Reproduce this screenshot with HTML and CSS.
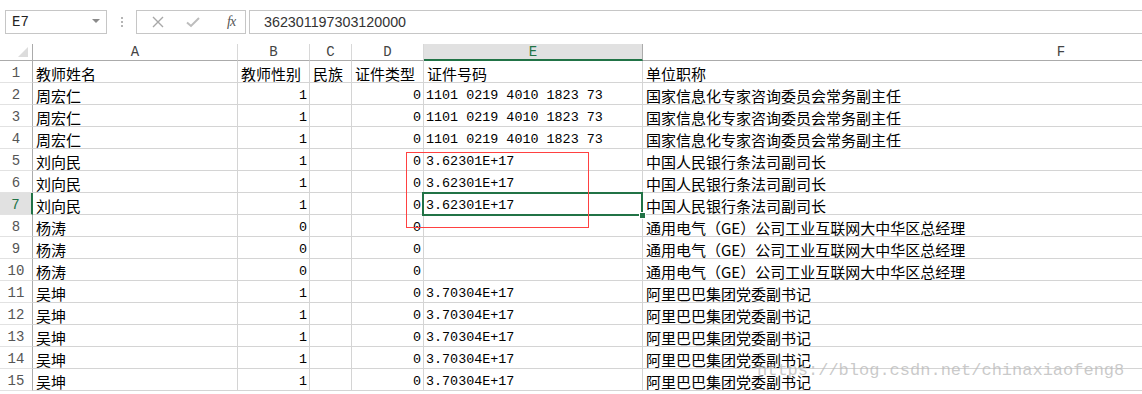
FILE: index.html
```html
<!DOCTYPE html>
<html lang="zh-CN">
<head>
    <meta charset="UTF-8">
    <title>Sheet1</title>
    <link rel="stylesheet" href="styles.css">
</head>
<body>
    <div class="formula-bar">
        <div class="name-box">
            <span>E7</span>
            <span class="drop"></span>
        </div>
        <div class="grip"><i></i><i></i><i></i></div>
        <div class="fx-tools">
            <svg class="tool" width="14" height="14" viewBox="0 0 14 14"><path d="M2 2 L12 12 M12 2 L2 12" stroke="#a8a8a8" stroke-width="1.4" fill="none"/></svg>
            <svg class="tool" width="16" height="14" viewBox="0 0 16 14"><path d="M2 7.5 L6 11 L14 3" stroke="#bdbdbd" stroke-width="2" fill="none"/></svg>
            <span class="fx">fx</span>
        </div>
        <div class="formula-input">362301197303120000</div>
    </div>

    <div class="sheet">
        <div class="row head">
            <div class="rh corner"><span class="tri"></span></div>
            <div class="c col-a">A</div>
            <div class="c col-b">B</div>
            <div class="c col-c">C</div>
            <div class="c col-d">D</div>
            <div class="c col-e active">E</div>
            <div class="c col-f">F</div>
        </div>

        <div class="row">
            <div class="rh">1</div>
            <div class="c col-a">教师姓名</div>
            <div class="c col-b">教师性别</div>
            <div class="c col-c">民族</div>
            <div class="c col-d">证件类型</div>
            <div class="c col-e">证件号码</div>
            <div class="c col-f">单位职称</div>
        </div>
        <div class="row">
            <div class="rh">2</div>
            <div class="c col-a">周宏仁</div>
            <div class="c col-b num">1</div>
            <div class="c col-c"></div>
            <div class="c col-d num">0</div>
            <div class="c col-e mono">1101 0219 4010 1823 73</div>
            <div class="c col-f">国家信息化专家咨询委员会常务副主任</div>
        </div>
        <div class="row">
            <div class="rh">3</div>
            <div class="c col-a">周宏仁</div>
            <div class="c col-b num">1</div>
            <div class="c col-c"></div>
            <div class="c col-d num">0</div>
            <div class="c col-e mono">1101 0219 4010 1823 73</div>
            <div class="c col-f">国家信息化专家咨询委员会常务副主任</div>
        </div>
        <div class="row">
            <div class="rh">4</div>
            <div class="c col-a">周宏仁</div>
            <div class="c col-b num">1</div>
            <div class="c col-c"></div>
            <div class="c col-d num">0</div>
            <div class="c col-e mono">1101 0219 4010 1823 73</div>
            <div class="c col-f">国家信息化专家咨询委员会常务副主任</div>
        </div>
        <div class="row">
            <div class="rh">5</div>
            <div class="c col-a">刘向民</div>
            <div class="c col-b num">1</div>
            <div class="c col-c"></div>
            <div class="c col-d num">0</div>
            <div class="c col-e mono">3.62301E+17</div>
            <div class="c col-f">中国人民银行条法司副司长</div>
        </div>
        <div class="row">
            <div class="rh">6</div>
            <div class="c col-a">刘向民</div>
            <div class="c col-b num">1</div>
            <div class="c col-c"></div>
            <div class="c col-d num">0</div>
            <div class="c col-e mono">3.62301E+17</div>
            <div class="c col-f">中国人民银行条法司副司长</div>
        </div>
        <div class="row">
            <div class="rh active">7</div>
            <div class="c col-a">刘向民</div>
            <div class="c col-b num">1</div>
            <div class="c col-c"></div>
            <div class="c col-d num">0</div>
            <div class="c col-e mono selected">3.62301E+17<span class="outline"><span class="handle"></span></span></div>
            <div class="c col-f">中国人民银行条法司副司长</div>
        </div>
        <div class="row">
            <div class="rh">8</div>
            <div class="c col-a">杨涛</div>
            <div class="c col-b num">0</div>
            <div class="c col-c"></div>
            <div class="c col-d num">0</div>
            <div class="c col-e"></div>
            <div class="c col-f">通用电气（GE）公司工业互联网大中华区总经理</div>
        </div>
        <div class="row">
            <div class="rh">9</div>
            <div class="c col-a">杨涛</div>
            <div class="c col-b num">0</div>
            <div class="c col-c"></div>
            <div class="c col-d num">0</div>
            <div class="c col-e"></div>
            <div class="c col-f">通用电气（GE）公司工业互联网大中华区总经理</div>
        </div>
        <div class="row">
            <div class="rh">10</div>
            <div class="c col-a">杨涛</div>
            <div class="c col-b num">0</div>
            <div class="c col-c"></div>
            <div class="c col-d num">0</div>
            <div class="c col-e"></div>
            <div class="c col-f">通用电气（GE）公司工业互联网大中华区总经理</div>
        </div>
        <div class="row">
            <div class="rh">11</div>
            <div class="c col-a">吴坤</div>
            <div class="c col-b num">1</div>
            <div class="c col-c"></div>
            <div class="c col-d num">0</div>
            <div class="c col-e mono">3.70304E+17</div>
            <div class="c col-f">阿里巴巴集团党委副书记</div>
        </div>
        <div class="row">
            <div class="rh">12</div>
            <div class="c col-a">吴坤</div>
            <div class="c col-b num">1</div>
            <div class="c col-c"></div>
            <div class="c col-d num">0</div>
            <div class="c col-e mono">3.70304E+17</div>
            <div class="c col-f">阿里巴巴集团党委副书记</div>
        </div>
        <div class="row">
            <div class="rh">13</div>
            <div class="c col-a">吴坤</div>
            <div class="c col-b num">1</div>
            <div class="c col-c"></div>
            <div class="c col-d num">0</div>
            <div class="c col-e mono">3.70304E+17</div>
            <div class="c col-f">阿里巴巴集团党委副书记</div>
        </div>
        <div class="row">
            <div class="rh">14</div>
            <div class="c col-a">吴坤</div>
            <div class="c col-b num">1</div>
            <div class="c col-c"></div>
            <div class="c col-d num">0</div>
            <div class="c col-e mono">3.70304E+17</div>
            <div class="c col-f">阿里巴巴集团党委副书记</div>
        </div>
        <div class="row">
            <div class="rh">15</div>
            <div class="c col-a">吴坤</div>
            <div class="c col-b num">1</div>
            <div class="c col-c"></div>
            <div class="c col-d num">0</div>
            <div class="c col-e mono">3.70304E+17</div>
            <div class="c col-f">阿里巴巴集团党委副书记</div>
        </div>

        <!-- hand-drawn annotation box -->
        <div class="red-box"></div>
    </div>

    <div class="watermark">https://blog.csdn.net/chinaxiaofeng8</div>
</body>
</html>
```

FILE: styles.css
```css
body {
    margin: 0;
    background-color: #fff;
    overflow: hidden;
    font-family: "Noto Sans CJK SC", sans-serif;
    color: #000;
}

/* formula bar */
.formula-bar {
    display: flex;
    align-items: center;
    height: 24px;
    padding: 10px 0 0 5px;
    margin-bottom: 10px;
}

.name-box {
    display: flex;
    align-items: center;
    justify-content: space-between;
    width: 102px;
    height: 24px;
    box-sizing: border-box;
    border: 1px solid #c6c6c6;
    padding: 0 6px 0 6px;
    font-family: "Liberation Mono", monospace;
    font-size: 14px;
    color: #222;
}

.drop {
    width: 0;
    height: 0;
    border-left: 4px solid transparent;
    border-right: 4px solid transparent;
    border-top: 4px solid #8a8a8a;
    margin-bottom: 2px;
}

.grip {
    display: flex;
    flex-direction: column;
    gap: 2px;
    margin: 0 13px 0 14px;
}

.grip i {
    display: block;
    width: 2px;
    height: 2px;
    background-color: #b5b5b5;
}

.fx-tools {
    display: flex;
    align-items: center;
    width: 110px;
    height: 24px;
    box-sizing: border-box;
    border: 1px solid #c6c6c6;
    padding-left: 14px;
}

.tool {
    margin-right: 20px;
}

.tool + .tool {
    margin-right: 26px;
}

.fx {
    font-family: "Liberation Serif", serif;
    font-style: italic;
    font-size: 14px;
    color: #555;
    letter-spacing: -1px;
}

.formula-input {
    flex: 1;
    height: 24px;
    box-sizing: border-box;
    margin-left: 3px;
    border-top: 1px solid #c6c6c6;
    border-bottom: 1px solid #c6c6c6;
    border-left: 1px solid #c6c6c6;
    padding-left: 14px;
    line-height: 22px;
    font-family: "Liberation Sans", sans-serif;
    font-size: 14.3px;
    color: #333;
}

/* grid */
.sheet {
    position: relative;
    width: 1479px;
}

.row {
    display: flex;
    height: 22px;
}

.row.head {
    height: 17px;
}

.rh {
    width: 33px;
    flex: none;
    box-sizing: border-box;
    border-right: 1px solid #ababab;
    border-bottom: 1px solid #e2e2e2;
    text-align: center;
    font-family: "Liberation Mono", monospace;
    font-size: 14px;
    line-height: 25px;
    color: #555;
}

.rh.active {
    background-color: #e1e1e1;
    border-right: 2px solid #217346;
    color: #217346;
}

.corner {
    position: relative;
    border-bottom: 1px solid #ababab;
}

.tri {
    position: absolute;
    right: 4px;
    bottom: 3px;
    width: 0;
    height: 0;
    border-left: 10px solid transparent;
    border-bottom: 10px solid #dcdcdc;
}

.c {
    flex: none;
    box-sizing: border-box;
    border-right: 1px solid #d4d4d4;
    border-bottom: 1px solid #d4d4d4;
    padding: 0 3px;
    font-size: 15px;
    line-height: 25px;
    white-space: nowrap;
    overflow: hidden;
}

.head .c {
    text-align: center;
    border-right-color: #d8d8d8;
    border-bottom: 1px solid #ababab;
    font-family: "Liberation Mono", monospace;
    font-size: 14px;
    line-height: 17px;
    color: #444;
}

.head .c.active {
    background-color: #e1e1e1;
    border-bottom: 2px solid #217346;
    border-right-color: #ababab;
    color: #217346;
}

.col-a { width: 205px; }
.col-b { width: 72px; }
.col-c { width: 42px; }
.col-d { width: 72px; }
.col-e { width: 219px; }
.col-f { width: 836px; border-right: none; }

.num,
.mono {
    font-family: "Liberation Mono", monospace;
    font-size: 13.4px;
    line-height: 26px;
}

.num {
    text-align: right;
    padding-right: 2px;
}

.mono {
    padding-left: 2px;
}

.selected {
    position: relative;
    overflow: visible;
}

.outline {
    position: absolute;
    left: -2px;
    top: -1px;
    width: 221px;
    height: 24px;
    box-sizing: border-box;
    border: 2px solid #217346;
}

.handle {
    position: absolute;
    right: -5px;
    bottom: -5px;
    width: 5px;
    height: 5px;
    background-color: #217346;
    border: 1px solid #fff;
}

.red-box {
    position: absolute;
    left: 406px;
    top: 108px;
    width: 183px;
    height: 76px;
    box-sizing: border-box;
    border: 1px solid #ff4141;
}

.watermark {
    position: absolute;
    left: 757px;
    top: 361px;
    font-family: "Liberation Mono", monospace;
    font-size: 17px;
    color: rgba(185, 185, 185, 0.75);
    white-space: nowrap;
}
```
